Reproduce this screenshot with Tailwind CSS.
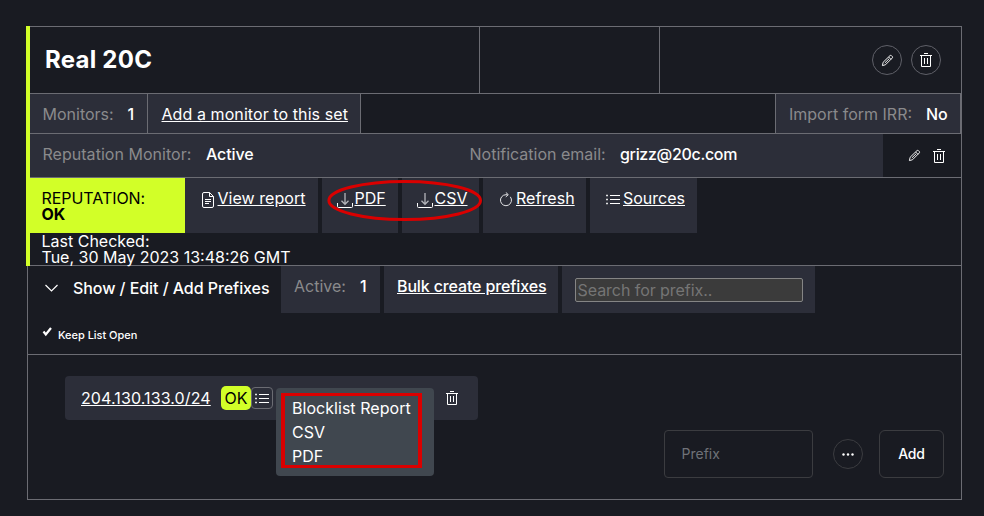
<!DOCTYPE html>
<html lang="en">
<head>
<meta charset="utf-8">
<title>Real 20C</title>
<script src="https://cdn.jsdelivr.net/npm/@tailwindcss/browser@4"></script>
</head>
<body class="bg-[#191b22] text-white text-base font-['Inter',sans-serif] h-[516px] overflow-hidden pt-[26px] pl-[26px]">
<svg class="hidden">
  <symbol id="pencil" viewBox="0 0 14 14"><path d="M1.500 12.500l.8-3.600 7.400-7.200q.8-.6 1.600.1l.9.9q.6.8-.1 1.600l-7.300 7.300zM8.200 3.200l2.600 2.600M4.200 9.600l4.600-4.500" fill="none" stroke="currentColor" stroke-width="1"/></symbol>
  <symbol id="trash" viewBox="0 0 12 14"><path d="M0 2.500h12M4 .5h4M1.500 2.500v11h9v-11M4.500 5v6M7.500 5v6" fill="none" stroke="currentColor" stroke-width="1"/></symbol>
  <symbol id="download" viewBox="0 0 16 15"><path d="M.5 10v3.500q0 1 1 1h13q1 0 1-1V10" fill="none" stroke="#fff"/><path d="M8 0v11M4.500 7.800L8 11.300l3.500-3.500" fill="none" stroke="#b4b5ba" stroke-width="1.300"/></symbol>
  <symbol id="list" viewBox="0 0 14 11"><path d="M4 1.500h10M4 5.500h10M4 9.500h10" stroke="currentColor" fill="none"/><path d="M0 1.500h2M0 5.500h2M0 9.500h2" stroke="currentColor" stroke-width="1.500" stroke-opacity=".85"/></symbol>
</svg>
<main class="w-[936px] whitespace-nowrap">
  <section class="h-[240px] border-l-4 border-l-[#d2ff28] border-r border-r-[#6b6c73]">
    <header class="flex h-[68px] border-y border-[#6b6c73]">
      <div class="w-[450px] border-r border-[#6b6c73] pl-[15px] pt-[17px]"><h1 class="text-2xl font-bold tracking-[0.25px]">Real 20C</h1></div>
      <div class="w-[180px] border-r border-[#6b6c73]"></div>
      <div class="flex flex-1 justify-end gap-[9px] pt-[18px] pr-5">
        <button class="flex size-[30px] items-center justify-center rounded-full border border-[#5f6068]"><svg class="size-[13px]"><use href="#pencil"/></svg></button>
        <button class="flex size-[30px] items-center justify-center rounded-full border border-[#5f6068]"><svg class="h-[14px] w-3"><use href="#trash"/></svg></button>
      </div>
    </header>
    <div class="flex h-10 border-b border-[#6b6c73]">
      <div class="flex w-[118px] border-r border-[#6b6c73] bg-[#2c2e39] pl-[12.5px] pt-2"><span class="w-[85px] text-[#8a8a8c]">Monitors:</span><span class="font-medium">1</span></div>
      <div class="w-[213px] border-r border-[#6b6c73] bg-[#2c2e39] pl-[13.5px] pt-2"><a class="tracking-[0.08px] underline">Add a monitor to this set</a></div>
      <div class="ml-auto flex w-[186px] border-x border-[#6b6c73] bg-[#2c2e39] pl-[13px] pt-2"><span class="w-[137px] text-[#8a8a8c]">Import form IRR:</span><span class="font-medium">No</span></div>
    </div>
    <div class="flex h-11 border-b border-[#6b6c73]">
      <div class="flex w-[853px] bg-[#2c2e39] pl-[12.5px] pt-2"><span class="w-[163.500px] text-[#8a8a8c] tracking-[0.03px]">Reputation Monitor:</span><span class="w-[263.500px] font-medium tracking-[-0.1px]">Active</span><span class="w-[150.500px] text-[#8a8a8c]">Notification email:</span><span class="font-medium tracking-[-0.33px]">grizz@20c.com</span></div>
      <div class="flex gap-3 pl-[25px] pt-[15px]"><svg class="size-[13px]"><use href="#pencil"/></svg><svg class="h-[14px] w-3"><use href="#trash"/></svg></div>
    </div>
    <div class="relative flex h-[55px]">
      <div class="w-[155px] bg-[#d2ff28] pl-[11.500px] pt-3 leading-4 tracking-[-0.05px] text-black">REPUTATION:<br><b>OK</b></div>
      <div class="mr-1 flex w-[133px] bg-[#2c2e39] pl-[17px] pt-2"><svg class="mt-[6px] mr-[3.500px] h-4 w-3" viewBox="0 0 12 16" fill="none" stroke="#fff"><path d="M2 .5h5.500l4 4V14q0 1.500-1.500 1.500H2Q.5 15.500.5 14V2Q.5.5 2 .5zM7.500.5v4h4M3 7.500h6M3 9.500h6M3 11.500h4"/></svg><a class="tracking-[0.05px] underline">View report</a></div>
      <div class="mr-1 flex w-[76px] bg-[#2c2e39] pl-[15px] pt-2"><svg class="mt-[7px] mr-[1.500px] h-[15px] w-4"><use href="#download"/></svg><a class="underline">PDF</a></div>
      <div class="mr-1 flex w-[77px] bg-[#2c2e39] pl-[15px] pt-2"><svg class="mt-[7px] mr-[1.500px] h-[15px] w-4"><use href="#download"/></svg><a class="underline">CSV</a></div>
      <div class="mr-1 flex w-[103px] bg-[#2c2e39] pl-[17px] pt-2"><svg class="mt-[6px] mr-1 h-[15px] w-3" viewBox="0 0 12 15" fill="none" stroke="#e4e4e7"><path d="M7.500 2.700H6a5.500 5.500 0 1 0 4.300 2.100M5.800.4l2.500 2.300-2.500 2.200"/></svg><a class="tracking-[0.05px] underline">Refresh</a></div>
      <div class="flex w-[107px] bg-[#2c2e39] pl-4 pt-2"><svg class="mt-2 mr-[3px] h-[11px] w-[14px]"><use href="#list"/></svg><a class="underline">Sources</a></div>
      <svg class="absolute left-[296px] top-0 h-11 w-[158px]" fill="none" stroke="#da0000" stroke-width="3"><ellipse cx="78.700" cy="22.500" rx="75.800" ry="19"/></svg>
    </div>
    <div class="h-[33px] border-b border-[#6b6c73] pl-[11.500px] leading-4">Last Checked:<br>Tue, 30 May 2023 13:48:26 GMT</div>
  </section>
  <section class="ml-px border-x border-b border-[#6b6c73]">
    <div class="h-[89px] border-b border-[#6b6c73]">
      <div class="flex h-[60px]">
        <div class="flex w-[253px] pl-[17px] pt-[10px]"><svg class="mt-[8px] mr-[15px] h-[9px] w-[13px]" viewBox="0 0 13 9" fill="none" stroke="#fff" stroke-width="1.200"><path d="M.5 1l6 6 6-6"/></svg><span class="font-medium tracking-[-0.06px]">Show / Edit / Add Prefixes</span></div>
        <div class="mr-1 flex h-[47px] w-[99px] bg-[#2c2e39] pl-[13px] pt-2"><span class="w-[66px] text-[#8a8a8c]">Active:</span><span class="font-medium">1</span></div>
        <div class="mr-1 h-[47px] w-[174px] bg-[#2c2e39] pl-[13px] pt-2"><a class="font-medium tracking-[-0.13px] underline">Bulk create prefixes</a></div>
        <div class="h-[47px] w-[253px] bg-[#2c2e39] px-[13px] pt-3"><input class="block h-6 w-[228px] rounded-[2px] border border-[#858585] bg-[#3b3b3b] px-[1.500px] tracking-[-0.05px] placeholder:text-[#757575]" placeholder="Search for prefix.."></div>
      </div>
      <label class="flex pl-[14px] text-[11px] font-medium leading-[18px] tracking-[-0.03px]"><svg class="mt-0 mr-[5px] h-[11px] w-[11px]" viewBox="0 0 11 11" fill="none" stroke="#fff" stroke-width="2.200"><path d="M1.500 5.500l2.300 3L9 2"/></svg>Keep List Open</label>
    </div>
    <div class="h-[144px] pt-[21px]">
      <div class="relative ml-[37px] flex h-11 w-[413px] rounded-[4px] bg-[#2c2e39] pl-4 pt-[10px]">
        <a class="w-[140px]"><span class="tracking-[0.11px] underline">204.130.133.0/24</span></a>
        <span class="h-6 w-[30px] rounded-[5px] bg-[#d2ff28] text-center text-black">OK</span>
        <button class="mt-px flex size-[22px] items-center justify-center rounded-[4px] border border-[#6b6c73]"><svg class="h-[11px] w-[14px]"><use href="#list"/></svg></button>
        <svg class="ml-auto mt-[5px] mr-5 h-[14px] w-3"><use href="#trash"/></svg>
        <div class="absolute left-[211px] top-3 h-[88px] w-[158px] rounded-[4px] bg-[#40474f] pl-4 pt-2 tracking-[0.04px]">
          Blocklist Report<br>CSV<br>PDF
          <div class="absolute left-[5px] top-[5px] h-[75px] w-[141px] border-x-4 border-y-3 border-[#da0000]"></div>
        </div>
      </div>
      <div class="mt-[10px] flex items-center justify-end pr-[17px] text-sm">
        <input class="h-12 w-[149px] rounded-[4px] border border-[#3b3c40] px-[16.500px] pb-[2px] placeholder:text-[#6f7278]" placeholder="Prefix">
        <button class="ml-5 flex size-[30px] items-center justify-center rounded-full border border-[#3b3c40]"><svg class="h-[3px] w-3" fill="#fff"><circle cx="1.500" cy="1.500" r="1.200"/><circle cx="6" cy="1.500" r="1.200"/><circle cx="10.500" cy="1.500" r="1.200"/></svg></button>
        <button class="ml-4 h-12 w-[65px] rounded-[6px] border border-[#3b3c40] font-medium tracking-[-0.15px]">Add</button>
      </div>
    </div>
  </section>
</main>
</body>
</html>
